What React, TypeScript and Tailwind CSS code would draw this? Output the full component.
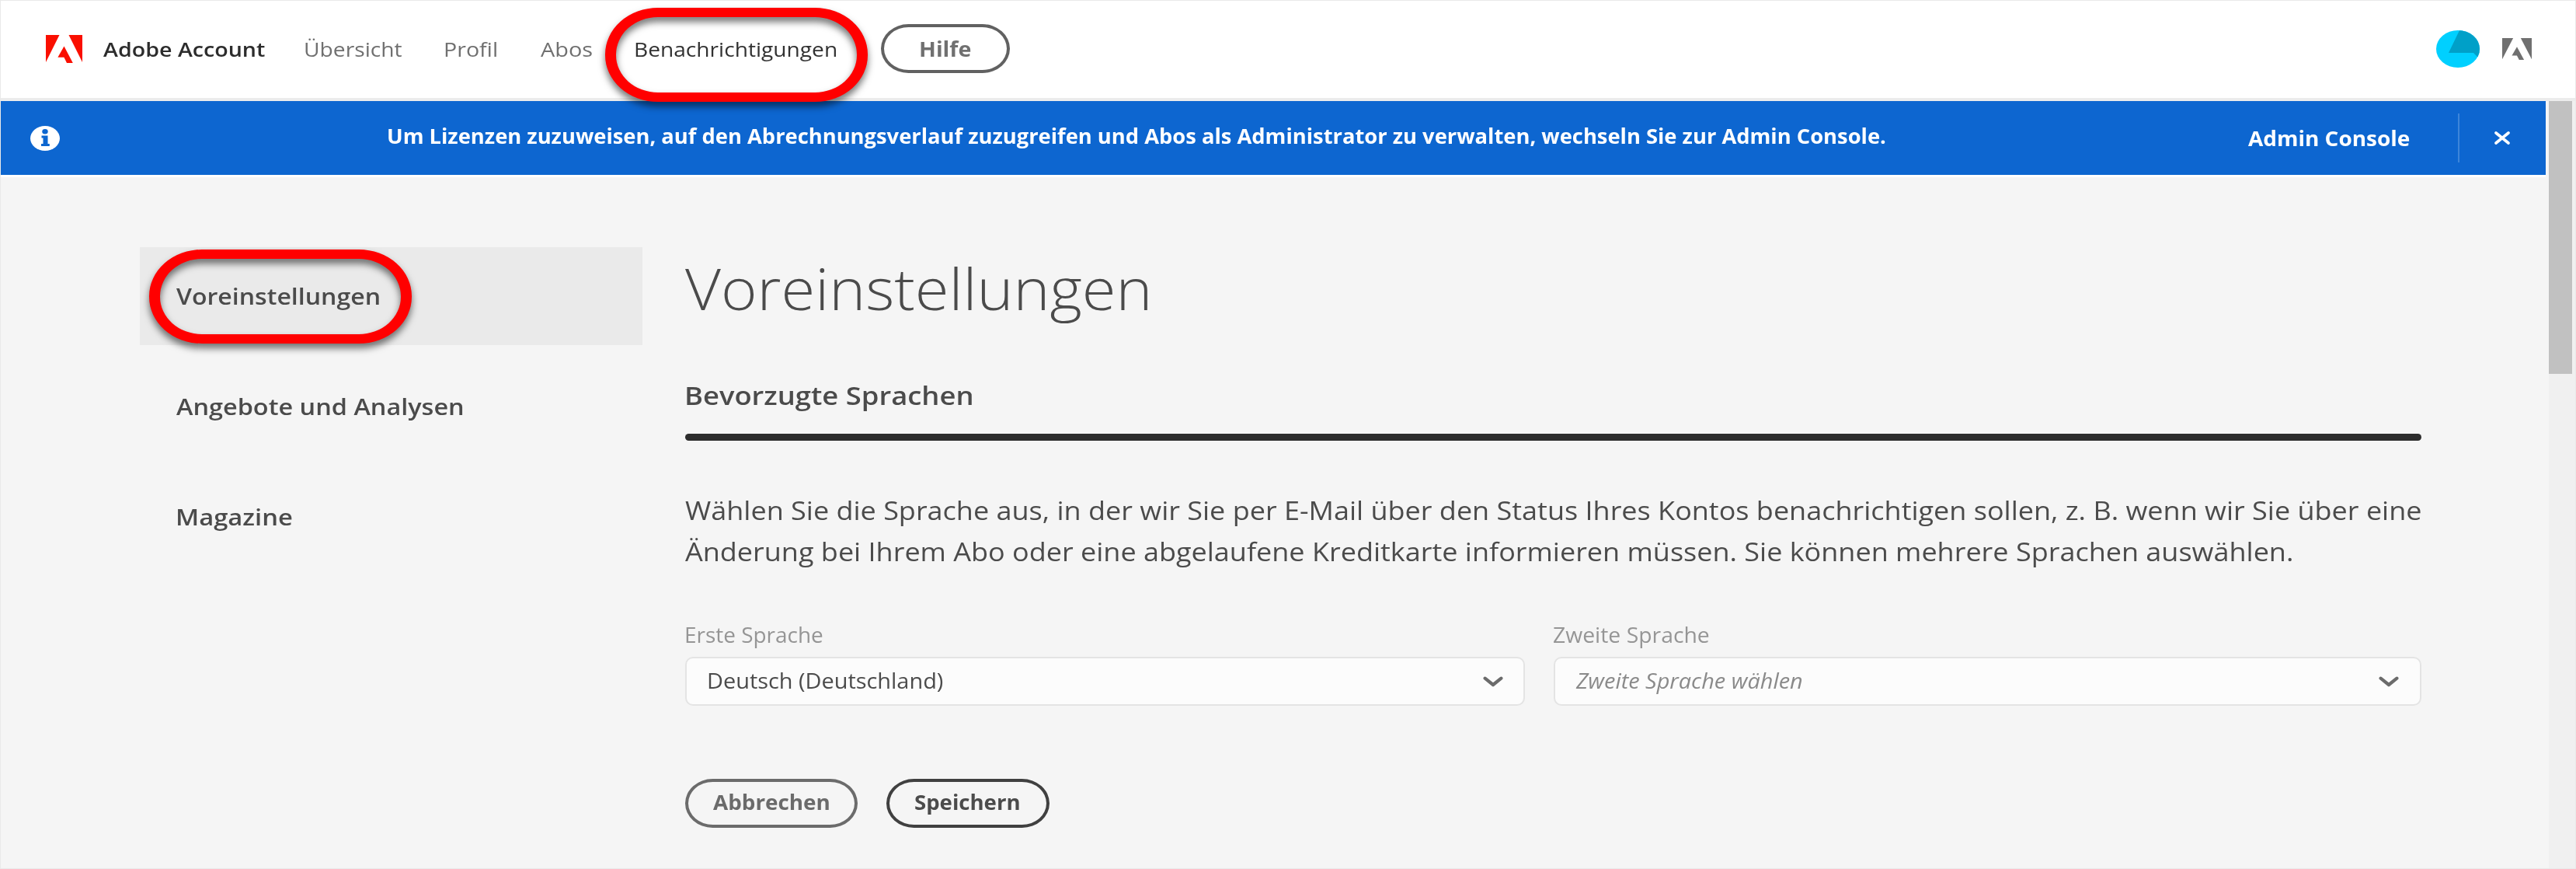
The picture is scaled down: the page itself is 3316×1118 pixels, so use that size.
import type { ReactNode } from 'react';

function AdobeMark({ className }: { className: string }) {
  return (
    <svg viewBox="0 0 47 36" preserveAspectRatio="none" fill="currentColor" className={className} aria-hidden="true">
      <path d="M0 0h17.5L0 35z" />
      <path d="M29.5 0H47v35z" />
      <path d="M23.5 14.5L34.8 36H27l-3.6-7.2h-8z" />
    </svg>
  );
}

function Stretch({ className, children }: { className: string; children: ReactNode }) {
  return <span className={`block origin-left whitespace-nowrap ${className}`}>{children}</span>;
}

function Ring({ className }: { className: string }) {
  return (
    <span
      className={`pointer-events-none absolute z-20 h-[121px] w-[338px] rounded-[68px/60px] border-x-[14px] border-y-[12px] border-[#ff0000] drop-shadow-[0_6px_5px_rgba(0,0,0,0.55)] ${className}`}
    />
  );
}

function Chevron() {
  return (
    <svg viewBox="0 0 26 14" fill="none" stroke="#6b6b6b" strokeWidth="4.2" strokeLinecap="round" strokeLinejoin="round" className="h-[14px] w-[26px] shrink-0" aria-hidden="true">
      <path d="M2.6 2.6L13 11L23.4 2.6" />
    </svg>
  );
}

function Header() {
  return (
    <header className="flex h-[125px] items-center bg-white pb-[2px] text-[26px] leading-[36px] text-[#707070]">
      <AdobeMark className="ml-[58px] h-[36px] w-[47px] text-[#fa0f00]" />
      <div className="ml-[27px] w-[258px] font-semibold text-[#2c2c2c]">
        <Stretch className="scale-x-[1.1]">Adobe Account</Stretch>
      </div>
      <nav className="flex">
        <a className="w-[180px]">
          <Stretch className="scale-x-[1.085]">Übersicht</Stretch>
        </a>
        <a className="w-[125px]">
          <Stretch className="scale-x-[1.1]">Profil</Stretch>
        </a>
        <a className="w-[120px]">
          <Stretch className="scale-x-[1.11]">Abos</Stretch>
        </a>
        <a className="relative w-[318px] text-[#323232]">
          <Stretch className="scale-x-[1.082]">Benachrichtigungen</Stretch>
          <Ring className="-left-[37px] -top-[35px]" />
        </a>
      </nav>
      <button className="flex h-[63px] w-[166px] items-center rounded-[36px/32px] border-4 border-[#616161] pl-[45px] font-bold">
        <Stretch className="scale-x-[1.1]">Hilfe</Stretch>
      </button>
      <svg viewBox="0 0 56 48" preserveAspectRatio="none" className="ml-auto h-[48px] w-[56px]" aria-hidden="true">
        <defs>
          <clipPath id="avatar">
            <ellipse cx="28" cy="24" rx="28" ry="24" />
          </clipPath>
        </defs>
        <g clipPath="url(#avatar)">
          <rect width="56" height="48" fill="#00d0ff" />
          <path d="M30 0L16 29H48L53 34H56V0z" fill="#00a0c8" />
        </g>
      </svg>
      <AdobeMark className="ml-[29px] mr-[56px] h-[28px] w-[38px] text-[#707070]" />
    </header>
  );
}

function Banner() {
  return (
    <div className="flex h-[95px] items-center bg-[#0d66d0] text-[26px] font-bold leading-[36px] text-white">
      <svg viewBox="0 0 38 32" preserveAspectRatio="none" className="ml-[38px] h-[32px] w-[38px]" aria-hidden="true">
        <ellipse cx="19" cy="16" rx="19" ry="16" fill="#fff" />
        <ellipse cx="19" cy="7.2" rx="3.7" ry="3.2" fill="#0d66d0" />
        <path d="M14.5 12.5h8v10.5h2.3v3H14v-3h2.5v-7.5h-2z" fill="#0d66d0" />
      </svg>
      <div className="ml-[421px] mb-[5px] w-[2396px]">
        <Stretch className="scale-x-[1.051]">
          Um Lizenzen zuzuweisen, auf den Abrechnungsverlauf zuzugreifen und Abos als Administrator zu verwalten, wechseln Sie zur Admin Console.
        </Stretch>
      </div>
      <a className="w-[270px]">
        <Stretch className="scale-x-[1.075]">Admin Console</Stretch>
      </a>
      <span className="h-[63px] w-[2px] bg-[#3d85d9]" />
      <svg viewBox="0 0 20 17" fill="none" stroke="#fff" strokeWidth="3.6" strokeLinecap="round" className="ml-[45px] h-[17px] w-[20px]" aria-hidden="true">
        <path d="M2 2L18 15M18 2L2 15" />
      </svg>
    </div>
  );
}

function Sidebar() {
  return (
    <aside className="mt-[90px] ml-[179px] flex w-[647px] flex-col gap-[16px] text-[29px] font-semibold leading-[40px] text-[#4b4b4b]">
      <a className="relative flex h-[126px] items-center bg-[#eaeaea] pl-[47px]">
        <Stretch className="scale-x-[1.105]">Voreinstellungen</Stretch>
        <Ring className="left-[12px] top-[3px]" />
      </a>
      <a className="flex h-[126px] items-center pl-[47px]">
        <Stretch className="scale-x-[1.118]">Angebote und Analysen</Stretch>
      </a>
      <a className="flex h-[126px] items-center pl-[46px]">
        <Stretch className="scale-x-[1.13]">Magazine</Stretch>
      </a>
    </aside>
  );
}

function Preferences() {
  return (
    <main className="ml-[55px] w-[2235px] text-[#4b4b4b]">
      <h1 className="mt-[93px] text-[74px] font-light leading-[100px]">
        <Stretch className="scale-x-[1.075]">Voreinstellungen</Stretch>
      </h1>
      <h2 className="mt-[68px] text-[32px] font-semibold leading-[40px]">
        <Stretch className="-ml-px scale-x-[1.137]">Bevorzugte Sprachen</Stretch>
      </h2>
      <div className="mt-[29px] h-[9px] rounded-full bg-[#2c2c2c]" />
      <p className="mt-[63px] text-[32px] leading-[53px]">
        <Stretch className="scale-x-[1.125]">
          Wählen Sie die Sprache aus, in der wir Sie per E-Mail über den Status Ihres Kontos benachrichtigen sollen, z. B. wenn wir Sie über eine
        </Stretch>
        <Stretch className="scale-x-[1.125]">
          Änderung bei Ihrem Abo oder eine abgelaufene Kreditkarte informieren müssen. Sie können mehrere Sprachen auswählen.
        </Stretch>
      </p>
      <div className="mt-[61px] flex gap-[37px] text-[27px]">
        <div className="w-[1081px]">
          <div className="leading-[40px] text-[#959595]">
            <Stretch className="-ml-px scale-x-[1.035]">Erste Sprache</Stretch>
          </div>
          <div className="mt-[8px] flex h-[63px] items-center justify-between rounded-[10px] border-2 border-[#e4e4e4] bg-[#fcfcfc] px-[26px]">
            <Stretch className="scale-x-[1.07]">Deutsch (Deutschland)</Stretch>
            <Chevron />
          </div>
        </div>
        <div className="w-[1117px]">
          <div className="leading-[40px] text-[#959595]">
            <Stretch className="-ml-px scale-x-[1.05]">Zweite Sprache</Stretch>
          </div>
          <div className="mt-[8px] flex h-[63px] items-center justify-between rounded-[10px] border-2 border-[#e4e4e4] bg-[#fcfcfc] px-[27px]">
            <Stretch className="scale-x-[1.07] italic text-[#8a8a8a]">Zweite Sprache wählen</Stretch>
            <Chevron />
          </div>
        </div>
      </div>
      <div className="mt-[94px] flex gap-[37px] text-[26px] font-bold leading-[36px]">
        <button className="flex h-[63px] w-[222px] items-center rounded-[36px/32px] border-4 border-[#6b6b6b] pb-[3px] pl-[32px] text-[#6b6b6b]">
          <Stretch className="scale-x-[1.07]">Abbrechen</Stretch>
        </button>
        <button className="flex h-[63px] w-[210px] items-center rounded-[36px/32px] border-4 border-[#404040] pb-[3px] pl-[32px] text-[#4b4b4b]">
          <Stretch className="scale-x-[1.06]">Speichern</Stretch>
        </button>
      </div>
    </main>
  );
}

export default function App() {
  return (
    <div className="h-[1118px] w-[3316px] overflow-hidden border border-[#e9e9e9] bg-[#f5f5f5] font-['Open_Sans',sans-serif]">
      <Header />
      <div className="h-[4px] bg-[#ececec]" />
      <div className="flex h-[988px]">
        <div className="w-[3276px]">
          <Banner />
          <div className="h-[3px] bg-white" />
          <div className="flex">
            <Sidebar />
            <Preferences />
          </div>
        </div>
        <div className="ml-[4px] flex-1 bg-[#f0f0f0]">
          <div className="h-[351px] w-[30px] bg-[#c1c1c1]" />
        </div>
      </div>
    </div>
  );
}
